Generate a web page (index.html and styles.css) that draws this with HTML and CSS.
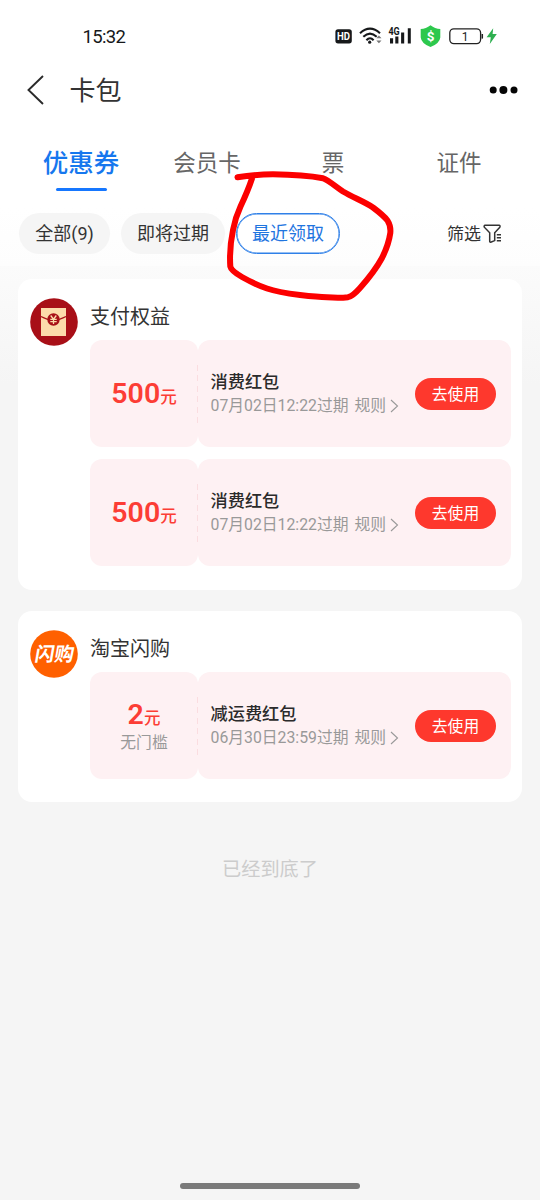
FILE: index.html
```html
<!DOCTYPE html>
<html lang="zh-CN">
<head>
<meta charset="utf-8">
<title>卡包</title>
<link rel="stylesheet" href="styles.css">
</head>
<body>
<div class="screen">
  <div class="top">
    <div class="status">
      <span class="time">15:32</span>
      <svg class="status-icons" width="170" height="26" viewBox="0 0 170 26">
        <rect x="0.4" y="6.2" width="16.4" height="14.2" rx="2.6" fill="#16181a"/>
        <text x="8.6" y="17.3" class="hd" text-anchor="middle" textLength="13" lengthAdjust="spacingAndGlyphs">HD</text>
        <g fill="none" stroke="#16181a" stroke-width="2.1">
          <path d="M25 10.2Q35 1.200 45 10.200"/>
          <path d="M28.300 13.800Q35 7.400 41.700 13.800"/>
          <path d="M31.400 17.200Q35 13.400 38.600 17.200"/>
        </g>
        <circle cx="34.700" cy="19.200" r="1.600" fill="#16181a"/>
        <path d="M41.300 15.200 43.900 12.600 46.500 15.200ZM41.300 17.600 43.900 20.200 46.500 17.600Z" fill="#777"/>
        <text x="53.400" y="12" class="net" textLength="11.300" lengthAdjust="spacingAndGlyphs">4G</text>
        <path d="M55 15.200h3.100v5.200H55zM60.300 13.400h3.100v7h-3.100zM66.100 9.600h3.100v10.800h-3.100zM72.800 5.200h3v15.200h-3z" fill="#16181a"/>
        <path d="M95.500 2.200Q100 5.800 105.300 6V14.500Q104.600 20.600 95.500 24Q86.400 20.600 85.700 14.500V6Q91 5.800 95.500 2.200Z" fill="#2dc84d"/>
        <text x="95.500" y="18" class="shield" text-anchor="middle">$</text>
        <rect x="114.800" y="5.800" width="30.800" height="14.800" rx="4" fill="#fff" stroke="#222" stroke-width="1.300"/>
        <path d="M147.300 11v4.600" stroke="#222" stroke-width="1.500"/>
        <text x="130" y="17.500" class="charge" text-anchor="middle">1</text>
        <path d="M158.200 5.200 151.600 14.300h4.200l-1 6.800 7-10h-4.200z" fill="#2eaf50"/>
      </svg>
    </div>
    <div class="header">
      <svg class="back" width="20" height="32" viewBox="0 0 20 32"><path d="M17 2 2.500 16 17 30" fill="none" stroke="#2a2a2a" stroke-width="1.900"/></svg>
      <h1 class="title">卡包</h1>
      <svg class="more" width="30" height="10" viewBox="0 0 30 10"><circle cx="4.200" cy="5" r="3.500"/><circle cx="14.400" cy="5" r="4"/><circle cx="25" cy="5" r="3.500"/></svg>
    </div>
    <div class="tabs">
      <div class="tab active">优惠券</div>
      <div class="tab">会员卡</div>
      <div class="tab">票</div>
      <div class="tab">证件</div>
    </div>
    <div class="filters">
      <span class="chip all">全部(9)</span>
      <span class="chip soon">即将过期</span>
      <span class="chip recent">最近领取</span>
      <span class="filter">筛选
        <svg width="20" height="22" viewBox="0 0 20 22"><path d="M2 2.200H16.200Q17.600 2.600 16.800 4.200L11.700 9.800V17.600L7.700 19.200Q6.700 19.400 6.700 18.200V9.800L1.300 4.200Q.7 2.700 2 2.200ZM13.800 11.700H18M13.800 14.700H18M13.800 17.700H18" fill="none" stroke="#333" stroke-width="1.500"/></svg>
      </span>
    </div>
  </div>

  <div class="list">
    <section class="card first">
      <svg class="logo" width="48" height="48" viewBox="0 0 48 48">
        <circle cx="24" cy="24" r="23.800" fill="#a80f17"/>
        <path d="M11 10h25v28H11z" fill="#fcdbab"/>
        <path d="M11 18.500Q17 22 23.500 22T36 18.500" fill="none" stroke="#a80f17" stroke-width="1.300"/>
        <circle cx="23.500" cy="21.500" r="6.200" fill="#a80f17"/>
        <path d="M20.700 17.500l2.800 3.600 2.800-3.600M20.300 21.400h6.400M20.300 23.600h6.400M23.500 21v5" fill="none" stroke="#fcdbab" stroke-width="1.300"/>
      </svg>
      <div class="body">
        <h2 class="name">支付权益</h2>
        <div class="coupon">
          <div class="value"><div class="amount">500<small>元</small></div></div>
          <div class="detail">
            <div class="info"><div class="kind">消费红包</div><div class="meta"><span>07月02日12:22过期</span><span class="rule">规则</span><svg width="9" height="14" viewBox="0 0 9 14"><path d="M1 1 7.500 7 1 13"/></svg></div></div>
            <span class="use">去使用</span>
          </div>
        </div>
        <div class="coupon">
          <div class="value"><div class="amount">500<small>元</small></div></div>
          <div class="detail">
            <div class="info"><div class="kind">消费红包</div><div class="meta"><span>07月02日12:22过期</span><span class="rule">规则</span><svg width="9" height="14" viewBox="0 0 9 14"><path d="M1 1 7.500 7 1 13"/></svg></div></div>
            <span class="use">去使用</span>
          </div>
        </div>
      </div>
    </section>
    <section class="card">
      <svg class="logo" width="48" height="48" viewBox="0 0 48 48">
        <circle cx="24" cy="24" r="23.800" fill="#ff6000"/>
        <text x="23.500" y="31" class="brand" text-anchor="middle" transform="translate(5.500 0) skewX(-10)">闪购</text>
      </svg>
      <div class="body">
        <h2 class="name">淘宝闪购</h2>
        <div class="coupon">
          <div class="value"><div class="amount">2<small>元</small></div><div class="limit">无门槛</div></div>
          <div class="detail">
            <div class="info"><div class="kind">减运费红包</div><div class="meta"><span>06月30日23:59过期</span><span class="rule">规则</span><svg width="9" height="14" viewBox="0 0 9 14"><path d="M1 1 7.500 7 1 13"/></svg></div></div>
            <span class="use">去使用</span>
          </div>
        </div>
      </div>
    </section>
    <p class="end">已经到底了</p>
  </div>
  <div class="home-bar"></div>

  <svg class="marker" width="180" height="140" viewBox="220 165 180 140">
    <path d="M237.500 177.300C248 175.500 262 174.300 273 174.300C290 174.500 311 176 323 178.300C329 180.500 336 187 343 191.500C354 198 364 201.500 373 207.500C379 212 384 216 387.500 220.500Q391 226 390.300 233C389 242 386 250 382 258C376 269 368 279 360 288Q353 296 348 297.200C341 298 334 297.800 327 297.300C318 297 309 296 300 295C288 293.500 277 292 267 288.500C258 285.500 250 281.500 242 277Q231 270.500 230.300 266.500C229.500 254 230.500 242 233 230C234.500 222 237 214 240.500 206.500C244.500 198 248.500 189 252 178.500"/>
  </svg>
</div>
</body>
</html>
```

FILE: styles.css
```css
* { box-sizing: border-box; }
body {
  margin: 0;
  font-family: Roboto, "Noto Sans CJK SC", sans-serif;
  color: #333;
}
h1, h2, p { margin: 0; font-weight: 400; }
svg { display: block; flex: none; }
.screen {
  position: relative;
  display: flex;
  flex-direction: column;
  width: 540px;
  height: 1200px;
  overflow: hidden;
  background: linear-gradient(#fbfbfb 265px, #f5f5f5 385px);
}
.top { height: 266px; background: linear-gradient(#fff 208px, #fdfdfd 266px); }

.status {
  display: flex;
  align-items: center;
  justify-content: space-between;
  height: 64px;
  padding: 10px 35px 0 82.5px;
}
.time { font-size: 18.5px; letter-spacing: -.65px; color: #16181a; }
.hd { font: 700 11px Roboto, sans-serif; fill: #fff; }
.net { font: 700 10px Roboto, sans-serif; fill: #16181a; }
.shield { font: 700 13.5px Roboto, sans-serif; fill: #fff; }
.charge { font: 400 12px Roboto, sans-serif; fill: #222; }
.status-icons { margin-top: -2px; }

.header {
  display: flex;
  align-items: center;
  height: 52px;
  padding: 0 21px 0 26px;
}
.title { margin-left: 23.5px; padding-top: 3px; font-size: 26px; line-height: 49px; }
.more { margin-left: auto; fill: #050505; }

.tabs {
  display: grid;
  grid-template-columns: repeat(4, 126px);
  padding: 21px 18px 0;
  height: 94px;
}
.tab {
  display: flex;
  flex-direction: column;
  align-items: center;
  font-size: 22.5px;
  line-height: 52px;
  color: #666;
}
.tab.active { font-size: 25.5px; font-weight: 500; color: #1677ee; }
.tab.active::after {
  content: "";
  width: 51px;
  height: 3px;
  margin-top: -1px;
  border-radius: 2px;
  background: #1677ff;
}

.filters { display: flex; align-items: center; padding: 3px 37px 0 19px; }
.chip {
  height: 41px;
  border-radius: 21px;
  background: #f5f5f5;
  font-size: 18px;
  line-height: 42px;
  text-align: center;
}
.all { width: 91px; }
.soon { width: 104px; margin-left: 11px; }
.recent {
  width: 104px;
  margin-left: 11px;
  border: 1px solid #2f80e8;
  box-shadow: inset 0 0 0 .5px #2f80e8;
  background: #fff;
  line-height: 40px;
  color: #1f75df;
}
.filter {
  display: flex;
  align-items: center;
  gap: 2px;
  margin-left: auto;
  font-size: 17px;
  line-height: 22px;
}

.list { flex: 1; padding: 13px 18px 0; }
.card {
  display: flex;
  gap: 12px;
  height: 191px;
  margin-bottom: 21px;
  padding: 19px 11px 0 12px;
  border-radius: 14px;
  background: #fff;
}
.card.first { height: 311px; }
.brand { font: 700 19.5px "Noto Sans CJK SC", sans-serif; fill: #fff; }
.body { flex: 1; }
.name { height: 42px; font-size: 20px; line-height: 38px; }
.coupon { display: flex; height: 107px; margin-bottom: 12px; }
.value, .detail { border-radius: 12px; background: #fef1f3; }
.value {
  display: flex;
  flex-direction: column;
  align-items: center;
  justify-content: center;
  width: 108px;
  padding-top: 4px;
}
.amount { font-size: 28.5px; font-weight: 600; line-height: 26px; color: #fc3d35; }
.amount small { font-size: 16.5px; font-weight: 500; }
.limit { font-size: 15.8px; line-height: 22px; color: #999; }
.detail {
  position: relative;
  display: flex;
  align-items: center;
  justify-content: space-between;
  flex: 1;
  padding: 0 15px 0 12.5px;
}
.detail::before {
  content: "";
  position: absolute;
  left: -1px;
  top: 25px;
  height: 58px;
  width: 1px;
  background: repeating-linear-gradient(#fbdde0 0 6px, transparent 6px 10.5px);
}
.info { padding-top: 1px; }
.kind { font-size: 17.2px; font-weight: 500; line-height: 24px; color: #2b2b2b; }
.meta {
  display: flex;
  align-items: center;
  font-size: 15.8px;
  line-height: 24px;
  color: #999;
  white-space: nowrap;
}
.rule { margin: 0 4px 0 6px; }
.meta svg { margin-top: -1px; fill: none; stroke: #999; stroke-width: 1.1; }
.use {
  width: 81px;
  height: 32px;
  border-radius: 16px;
  background: #fe382d;
  font-size: 15.8px;
  line-height: 33px;
  text-align: center;
  color: #fff;
}
.end { padding-top: 31px; font-size: 19.2px; line-height: 32px; text-align: center; color: #ccc; }
.home-bar {
  align-self: center;
  width: 180px;
  height: 6px;
  margin-bottom: 11px;
  border-radius: 3px;
  background: #7a7a7a;
}
.marker { position: absolute; left: 220px; top: 165px; fill: none; stroke: #fc0000; stroke-width: 6; stroke-linecap: round; stroke-linejoin: round; }
```
